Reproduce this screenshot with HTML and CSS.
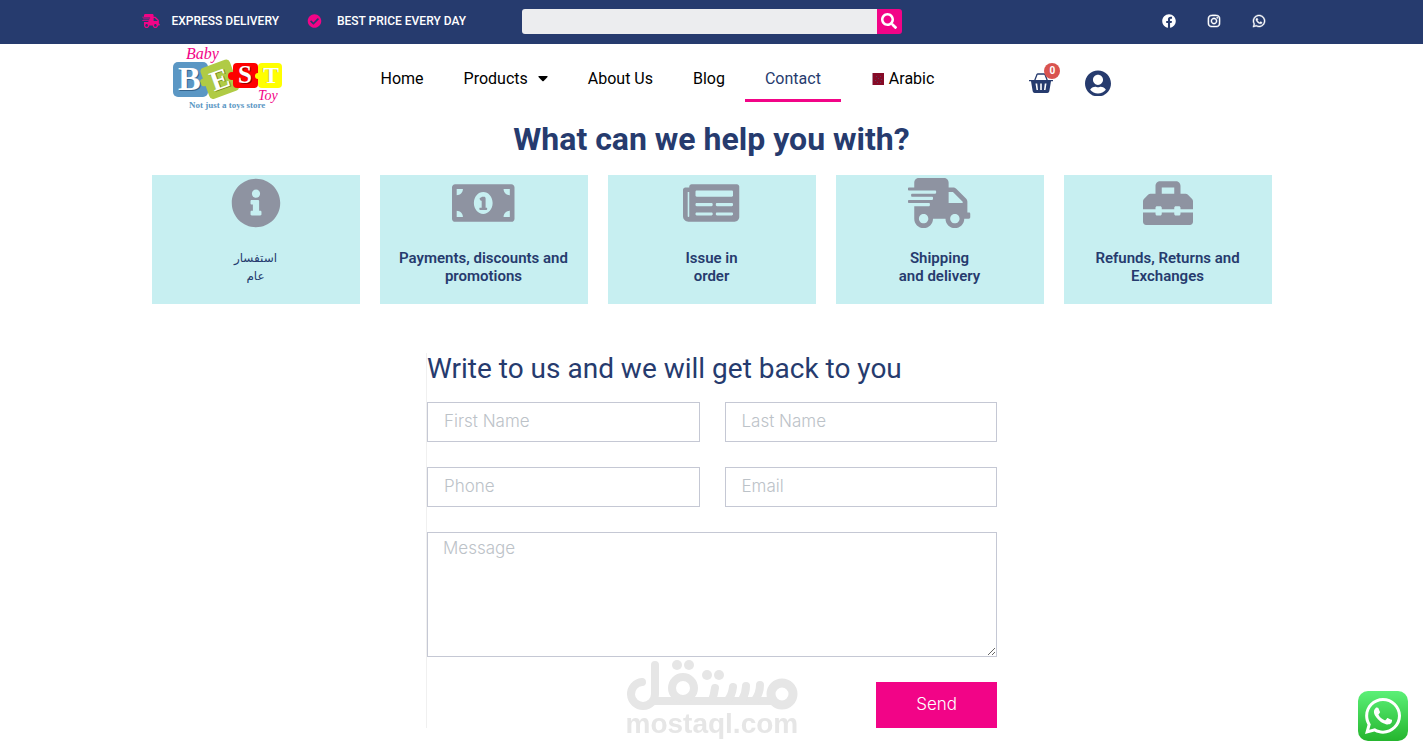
FILE: index.html
```html
<!DOCTYPE html>
<html lang="en">
<head>
<meta charset="utf-8">
<meta name="viewport" content="width=device-width, initial-scale=1">
<title>Contact – Baby Best Toy</title>
<link rel="stylesheet" href="styles.css">
</head>
<body>
<svg class="sprite" aria-hidden="true">
  <symbol id="i-truck" viewBox="0 0 640 512"><path d="M624 352h-16V243.900c0-12.700-5.100-24.900-14.100-33.900L494 110.100c-9-9-21.200-14.100-33.900-14.100H416V48c0-26.500-21.500-48-48-48H112C85.500 0 64 21.500 64 48v48H8c-4.400 0-8 3.600-8 8v16c0 4.400 3.600 8 8 8h272c4.400 0 8 3.600 8 8v16c0 4.400-3.600 8-8 8H40c-4.400 0-8 3.600-8 8v16c0 4.400 3.600 8 8 8h208c4.400 0 8 3.600 8 8v16c0 4.400-3.600 8-8 8H8c-4.400 0-8 3.600-8 8v16c0 4.400 3.600 8 8 8h208c4.400 0 8 3.600 8 8v16c0 4.400-3.600 8-8 8H64v128c0 53 43 96 96 96s96-43 96-96h128c0 53 43 96 96 96s96-43 96-96h48c8.800 0 16-7.200 16-16v-32c0-8.800-7.200-16-16-16zM160 464c-26.500 0-48-21.500-48-48s21.500-48 48-48 48 21.500 48 48-21.500 48-48 48zm320 0c-26.500 0-48-21.500-48-48s21.500-48 48-48 48 21.500 48 48-21.500 48-48 48zm80-208H416V144h44.100l99.900 99.900V256z"/></symbol>
  <symbol id="i-whatsapp" viewBox="0 0 448 512"><path d="M380.900 97.100C339 55.100 283.200 32 223.900 32c-122.400 0-222 99.600-222 222 0 39.100 10.200 77.300 29.600 111L0 480l117.700-30.900c32.400 17.700 68.900 27 106.100 27h.1c122.300 0 224.100-99.600 224.100-222 0-59.300-25.200-115-67.100-157zm-157 341.600c-33.200 0-65.700-8.900-94-25.700l-6.700-4-69.800 18.300L72 359.200l-4.400-7c-18.500-29.400-28.200-63.300-28.200-98.200 0-101.700 82.800-184.500 184.600-184.500 49.300 0 95.600 19.200 130.400 54.100 34.800 34.900 56.200 81.200 56.100 130.500 0 101.800-84.900 184.600-186.600 184.600zm101.200-138.200c-5.500-2.800-32.800-16.200-37.900-18-5.100-1.900-8.800-2.800-12.500 2.800-3.700 5.600-14.300 18-17.600 21.800-3.200 3.700-6.500 4.200-12 1.400-32.600-16.300-54-29.100-75.500-66-5.700-9.800 5.700-9.100 16.300-30.300 1.800-3.700.9-6.900-.5-9.700-1.400-2.800-12.500-30.100-17.100-41.200-4.500-10.800-9.100-9.300-12.500-9.500-3.200-.2-6.900-.2-10.600-.2-3.700 0-9.700 1.400-14.800 6.900-5.100 5.600-19.400 19-19.400 46.300 0 27.300 19.900 53.700 22.600 57.400 2.800 3.700 39.100 59.700 94.800 83.800 35.200 15.200 49 16.500 66.600 13.900 10.700-1.600 32.800-13.400 37.400-26.400 4.600-13 4.600-24.100 3.200-26.400-1.300-2.500-5-3.900-10.500-6.600z"/></symbol>
</svg>

<div class="topbar">
  <div class="container topbar-row">
    <ul class="perks">
      <li><svg class="perk-icon perk-truck"><use href="#i-truck"/></svg>EXPRESS DELIVERY</li>
      <li><svg class="perk-icon" viewBox="0 0 512 512"><path d="M504 256c0 137-111 248-248 248S8 393 8 256 119 8 256 8s248 111 248 248zM227.300 387.300l184-184c6.200-6.200 6.200-16.400 0-22.600l-22.600-22.600c-6.200-6.200-16.400-6.200-22.600 0L216 308.100l-70.100-70.100c-6.200-6.200-16.400-6.200-22.600 0l-22.600 22.600c-6.200 6.200-6.200 16.400 0 22.600l104 104c6.200 6.300 16.400 6.300 22.600.1z"/></svg>BEST PRICE EVERY DAY</li>
    </ul>
    <form class="search" role="search">
      <input type="search" aria-label="Search">
      <button type="button" aria-label="Search"><svg viewBox="0 0 512 512"><path d="M505 442.700L405.300 343c-4.500-4.500-10.600-7-17-7H372c27.600-35.300 44-79.700 44-128C416 93.100 322.900 0 208 0S0 93.100 0 208s93.100 208 208 208c48.300 0 92.700-16.400 128-44v16.300c0 6.400 2.500 12.500 7 17l99.700 99.700c9.400 9.400 24.600 9.400 33.900 0l28.300-28.300c9.400-9.400 9.400-24.600.1-34zM208 336c-70.700 0-128-57.200-128-128 0-70.700 57.200-128 128-128 70.700 0 128 57.200 128 128 0 70.700-57.200 128-128 128z"/></svg></button>
    </form>
    <div class="social">
      <a href="#" aria-label="Facebook"><svg viewBox="0 0 512 512"><path d="M504 256C504 119 393 8 256 8S8 119 8 256c0 123.800 90.700 226.400 209.300 245V327.700h-63V256h63v-54.600c0-62.200 37-96.500 93.700-96.500 27.100 0 55.500 4.800 55.500 4.800v61h-31.300c-30.800 0-40.400 19.100-40.400 38.700V256h68.800l-11 71.700h-57.800V501C413.300 482.400 504 379.800 504 256z"/></svg></a>
      <a href="#" aria-label="Instagram"><svg class="bold-icon" viewBox="0 0 448 512"><path d="M224.100 141c-63.600 0-114.900 51.300-114.900 114.900s51.300 114.900 114.900 114.900S339 319.500 339 255.900 287.700 141 224.100 141zm0 189.600c-41.100 0-74.700-33.500-74.700-74.700s33.500-74.700 74.700-74.700 74.700 33.500 74.700 74.700-33.600 74.700-74.700 74.700zm146.400-194.300c0 14.900-12 26.800-26.800 26.800-14.900 0-26.800-12-26.800-26.800s12-26.800 26.800-26.800 26.800 12 26.800 26.800zm76.100 27.200c-1.700-35.900-9.900-67.700-36.200-93.900-26.200-26.200-58-34.400-93.900-36.200-37-2.100-147.900-2.100-184.900 0-35.800 1.700-67.600 9.900-93.900 36.100s-34.400 58-36.200 93.900c-2.100 37-2.100 147.900 0 184.900 1.700 35.900 9.900 67.700 36.200 93.900s58 34.400 93.900 36.200c37 2.100 147.900 2.100 184.900 0 35.900-1.700 67.700-9.900 93.900-36.200 26.200-26.200 34.400-58 36.200-93.900 2.100-37 2.100-147.800 0-184.800zM398.800 388c-7.800 19.600-22.900 34.700-42.600 42.600-29.500 11.700-99.500 9-132.100 9s-102.700 2.600-132.100-9c-19.600-7.800-34.700-22.900-42.600-42.600-11.700-29.500-9-99.500-9-132.100s-2.600-102.700 9-132.100c7.800-19.600 22.900-34.700 42.600-42.600 29.500-11.700 99.500-9 132.100-9s102.700-2.600 132.100 9c19.600 7.800 34.700 22.900 42.600 42.600 11.700 29.500 9 99.500 9 132.100s2.700 102.700-9 132.100z"/></svg></a>
      <a href="#" aria-label="WhatsApp"><svg class="bold-icon"><use href="#i-whatsapp"/></svg></a>
    </div>
  </div>
</div>

<header class="container header">
  <a class="logo" href="#" aria-label="Baby Best Toy">
    <svg viewBox="0 0 110 66">
      <rect x="0" y="16" width="35" height="35" rx="5" fill="#5b97c4"/>
      <g transform="rotate(-20 46 33)"><rect x="31" y="17" width="31" height="33" rx="4" fill="#b0cb45"/><circle cx="31" cy="31" r="4" fill="#b0cb45"/></g>
      <rect x="60" y="17" width="25" height="25" rx="4" fill="#fe0000"/><circle cx="59" cy="30" r="4" fill="#fe0000"/>
      <rect x="85" y="17" width="24" height="25" rx="4" fill="#ffff00"/><circle cx="85" cy="30" r="3" fill="#ffff00"/>
      <g class="logo-letters">
        <text x="6" y="45" font-size="34" fill="#34638b">B</text><text x="5" y="44" font-size="34">B</text>
        <g transform="rotate(-20 46 33)"><text x="38" y="44" font-size="28" fill="#758a24">E</text><text x="37" y="43" font-size="28">E</text></g>
        <text x="66" y="38" font-size="25" fill="#990000">S</text><text x="65" y="37" font-size="25">S</text>
        <text x="89" y="37" font-size="24" fill="#c9c900">T</text><text x="90" y="37" font-size="24">T</text>
      </g>
      <g class="logo-script"><text x="13" y="13" font-size="16">Baby</text><text x="85" y="54" font-size="14">Toy</text></g>
      <text class="logo-tagline" x="16" y="62">Not just a toys store</text>
    </svg>
  </a>
  <nav class="nav" aria-label="Main">
    <a href="#">Home</a>
    <a href="#">Products<svg class="caret" viewBox="0 0 10 6"><path d="M1 0h8q1 0 .5 1L5.700 5q-.7.700-1.400 0L.5 1Q0 0 1 0z"/></svg></a>
    <a href="#">About Us</a>
    <a href="#">Blog</a>
    <a class="active" href="#" aria-current="page">Contact</a>
    <a class="lang" href="#"><svg class="flag" viewBox="0 0 12 12"><path fill="#860a27" d="M0 0h12v12H0z"/><path fill="#b58a9b" d="M0 0h1v12H0z"/><path fill="#5c3d5c" d="M4 3h1v1H4zM8 3h1v1H8zM6 5h1v1H6zM3 7h1v1H3zM9 6h1v1H9zM5 9h1v1H5zM8 9h1v1H8z"/></svg>Arabic</a>
  </nav>
  <div class="actions">
    <a class="cart" href="#" aria-label="Basket">
      <svg viewBox="0 0 24 20"><path fill="none" stroke="#263b6e" stroke-width="1.300" d="M5.500 8 8 1.600Q8.200 1 9 1h6q.8 0 1 .6L18.500 8"/><path fill="#263b6e" fill-rule="evenodd" d="M0 7h24v1.300h-2l-1.700 10q-.3 1.700-2 1.700H5.700q-1.700 0-2-1.700L2 8.300H0zM6.500 10.500l1 6.500H9l-.8-6.500zM11.200 10.500V17h1.600v-6.500zM15.800 10.500L15 17h1.500l1-6.500z"/></svg>
      <span class="badge">0</span>
    </a>
    <a class="account" href="#" aria-label="Account"><svg viewBox="0 0 496 512"><path d="M248 8C111 8 0 119 0 256s111 248 248 248 248-111 248-248S385 8 248 8zm0 84c53 0 96 43 96 96s-43 96-96 96-96-43-96-96 43-96 96-96zm0 356c-60 0-114-27-150-70 19-36 57-60 101-60 9 0 25 10 49 10s40-10 49-10c44 0 82 24 101 60-36 43-90 70-150 70z"/></svg></a>
  </div>
</header>

<main>
  <h1>What can we help you with?</h1>
  <div class="topics">
    <a class="topic" href="#">
      <svg viewBox="0 0 512 512"><path d="M256 8C119 8 8 119.100 8 256c0 137 111 248 248 248s248-111 248-248C504 119.100 393 8 256 8zm0 110c23.200 0 42 18.800 42 42s-18.800 42-42 42-42-18.800-42-42 18.800-42 42-42zm56 254c0 6.600-5.400 12-12 12h-88c-6.600 0-12-5.400-12-12v-24c0-6.600 5.400-12 12-12h12v-64h-12c-6.600 0-12-5.400-12-12v-24c0-6.600 5.400-12 12-12h64c6.600 0 12 5.400 12 12v100h12c6.600 0 12 5.400 12 12v24z"/></svg>
      <span class="arabic" lang="ar" dir="rtl">استفسار<br>عام</span>
    </a>
    <a class="topic" href="#">
      <svg viewBox="0 0 640 512"><path fill-rule="evenodd" d="M608 64H32C14 64 0 78 0 96v320c0 18 14 32 32 32h576c18 0 32-14 32-32V96c0-18-14-32-32-32zM48 400v-64c35 0 64 29 64 64H48zm0-224v-64h64c0 35-29 64-64 64zm272 192c-53 0-96-50-96-112s43-112 96-112 96 50 96 112-43 112-96 112zm272 32h-64c0-35 29-64 64-64v64zm0-224c-35 0-64-29-64-64h64v64z"/><path d="M352 304h-8v-96c0-9-7-16-16-16h-14c-5 0-9 1-13 4l-15 10c-4 3-5 8-2 11l9 13c2 4 7 5 11 2v72h-8c-9 0-16 0-16 8v8c0 4 4 8 8 8h64c4 0 8-4 8-8v-8c0-8-4-8-8-8z"/></svg>
      <span>Payments, discounts and<br>promotions</span>
    </a>
    <a class="topic" href="#">
      <svg viewBox="0 0 576 512"><path d="M552 64H88c-13.300 0-24 10.700-24 24v8H24c-13.300 0-24 10.700-24 24v272c0 30.900 25.100 56 56 56h472c26.500 0 48-21.500 48-48V88c0-13.300-10.700-24-24-24zM56 400a8 8 0 0 1-8-8V144h16v248a8 8 0 0 1-8 8zm236-16H140c-6.600 0-12-5.400-12-12v-8c0-6.600 5.400-12 12-12h152c6.600 0 12 5.400 12 12v8c0 6.600-5.400 12-12 12zm208 0H348c-6.600 0-12-5.400-12-12v-8c0-6.600 5.400-12 12-12h152c6.600 0 12 5.400 12 12v8c0 6.600-5.400 12-12 12zm-208-96H140c-6.600 0-12-5.400-12-12v-8c0-6.600 5.400-12 12-12h152c6.600 0 12 5.400 12 12v8c0 6.600-5.400 12-12 12zm208 0H348c-6.600 0-12-5.400-12-12v-8c0-6.600 5.400-12 12-12h152c6.600 0 12 5.400 12 12v8c0 6.600-5.400 12-12 12zm0-96H140c-6.600 0-12-5.400-12-12v-40c0-6.600 5.400-12 12-12h360c6.600 0 12 5.400 12 12v40c0 6.600-5.400 12-12 12z"/></svg>
      <span>Issue in<br>order</span>
    </a>
    <a class="topic" href="#">
      <svg viewBox="0 0 640 512"><use href="#i-truck"/></svg>
      <span>Shipping<br>and delivery</span>
    </a>
    <a class="topic" href="#">
      <svg viewBox="0 0 512 512"><path d="M502.600 214.600l-45.200-45.200c-6-6-14.200-9.400-22.700-9.400H384V80c0-26.500-21.500-48-48-48H176c-26.500 0-48 21.500-48 48v80H77.300c-8.500 0-16.700 3.400-22.700 9.400L9.400 214.600c-6 6-9.400 14.200-9.400 22.700V320h128v-16c0-8.800 7.200-16 16-16h32c8.800 0 16 7.200 16 16v16h128v-16c0-8.800 7.200-16 16-16h32c8.800 0 16 7.200 16 16v16h128v-82.700c0-8.500-3.400-16.700-9.400-22.700zM320 160H192V96h128v64zm64 208c0 8.800-7.200 16-16 16h-32c-8.800 0-16-7.200-16-16v-16H192v16c0 8.800-7.200 16-16 16h-32c-8.800 0-16-7.200-16-16v-16H0v96c0 17.700 14.300 32 32 32h448c17.700 0 32-14.300 32-32v-96H384v16z"/></svg>
      <span>Refunds, Returns and<br>Exchanges</span>
    </a>
  </div>

  <section class="contact">
    <h2>Write to us and we will get back to you</h2>
    <form class="contact-form">
      <input type="text" placeholder="First Name" aria-label="First Name">
      <input type="text" placeholder="Last Name" aria-label="Last Name">
      <input type="tel" placeholder="Phone" aria-label="Phone">
      <input type="email" placeholder="Email" aria-label="Email">
      <textarea placeholder="Message" aria-label="Message"></textarea>
      <button type="button">Send</button>
    </form>
  </section>
</main>

<div class="watermark">
  <svg viewBox="0 0 172 52" role="img" aria-label="مستقل">
    <g fill="none" stroke="#e6e6e6" stroke-width="8" stroke-linecap="round" stroke-linejoin="round">
      <path d="M16 23A12 12 0 1 0 29 35V6M29 42H147"/>
      <circle cx="57" cy="29" r="11"/>
      <path d="M86 41Q88 36 89 29M102 41Q106 36 107 28M116 41Q120 34 120 27M129 41Q134 34 134 26"/>
      <circle cx="156" cy="35" r="11" stroke-width="9"/>
    </g>
    <g fill="#e6e6e6"><circle cx="51" cy="6" r="5"/><circle cx="63" cy="6" r="5"/><circle cx="81" cy="16" r="5"/><circle cx="93" cy="16" r="5"/></g>
  </svg>
  <span>mostaql.com</span>
</div>

<a class="chat" href="#" aria-label="Chat on WhatsApp">
  <svg viewBox="0 0 448 512"><use href="#i-whatsapp"/></svg>
</a>
</body>
</html>
```
FILE: styles.css
```css
* {
  box-sizing: border-box;
}

body {
  margin: 0;
  background: #fff;
  color: #263b6e;
  font-family: Roboto, "Liberation Sans", sans-serif;
}

a {
  color: inherit;
  text-decoration: none;
}

button {
  border: 0;
  cursor: pointer;
}

svg {
  display: block;
  fill: currentColor;
}

.sprite {
  position: absolute;
  width: 0;
  height: 0;
}

.container {
  max-width: 1140px;
  margin: 0 auto;
}

/* Top bar */
.topbar {
  background: #263b6e;
  color: #fff;
}

.topbar-row {
  display: grid;
  grid-template-columns: 1fr 1fr 1fr;
  align-items: center;
  min-height: 44px;
  padding-bottom: 2px;
}

.perks {
  display: flex;
  gap: 28px;
  margin: 0;
  padding: 0;
  list-style: none;
  font-size: 12px;
  font-weight: 500;
  line-height: 16px;
  white-space: nowrap;
}

.perks li {
  display: flex;
  align-items: center;
  gap: 15px;
}

.perk-icon {
  width: 15px;
  height: 14px;
  color: #f20487;
}

.perk-truck {
  width: 18px;
  margin-right: -3px;
}

.search {
  display: flex;
  height: 25px;
  overflow: hidden;
  border-radius: 3px;
}

.search input {
  flex: 1;
  min-width: 0;
  border: 0;
  border-radius: 0;
  padding: 0 8px;
  background: #ecedef;
}

.search button {
  display: grid;
  place-items: center;
  width: 25px;
  padding: 0;
  background: #f20487;
  color: #fff;
}

.search svg {
  width: 16px;
}

.social {
  display: flex;
  justify-content: flex-end;
  gap: 31px;
  padding-right: 16px;
}

.social svg {
  width: 14px;
  height: 14px;
}

.bold-icon {
  overflow: visible;
  stroke: currentColor;
  stroke-width: 16;
}

/* Header */
.header {
  display: flex;
  align-items: center;
  padding: 2px 31px;
}

.logo {
  flex: 0 0 110px;
  margin-right: 78px;
}

.logo-letters {
  fill: #fff;
  font-family: "Liberation Serif", serif;
  font-weight: 700;
}

.logo-script {
  fill: #f20487;
  font-family: "Liberation Serif", cursive;
  font-style: italic;
}

.logo-tagline {
  fill: #5b97c4;
  font-family: "Liberation Serif", serif;
  font-size: 9px;
  font-weight: 700;
}

.nav {
  display: flex;
  color: #000;
  font-size: 16px;
  line-height: 20px;
  white-space: nowrap;
}

.nav a {
  display: flex;
  align-items: center;
  padding: 12px 20px 10px;
  border-bottom: 3px solid transparent;
}

.nav .active {
  border-color: #f20487;
  color: #263b6e;
}

.caret {
  width: 10px;
  height: 6px;
  margin-left: 10px;
}

.nav .lang {
  gap: 5px;
  margin-left: 11px;
}

.flag {
  width: 12px;
}

.actions {
  display: flex;
  align-items: center;
  gap: 32px;
  padding: 8px 0 0 75px;
}

.cart {
  position: relative;
}

.cart svg {
  width: 24px;
}

.badge {
  position: absolute;
  top: -10px;
  right: -7px;
  width: 16px;
  border-radius: 50%;
  background: #d9534f;
  color: #fff;
  font-size: 10px;
  font-weight: 700;
  line-height: 16px;
  text-align: center;
}

.account svg {
  width: 26px;
}

/* Help topics */
h1 {
  margin: 5px 0 16px;
  font-size: 32px;
  font-weight: 700;
  line-height: 40px;
  text-align: center;
}

.topics {
  display: grid;
  grid-template-columns: repeat(5, 1fr);
  gap: 20px;
  max-width: 1120px;
  margin: 0 auto;
}

.topic {
  display: flex;
  flex-direction: column;
  align-items: center;
  gap: 21px;
  padding: 3px 10px 19px;
  background: #c7eff1;
  font-size: 15px;
  font-weight: 600;
  line-height: 18px;
  text-align: center;
}

.topic svg {
  height: 50px;
  color: #8e93a1;
}

.topic .arabic {
  font-family: "DejaVu Sans", sans-serif;
  font-size: 12px;
  font-weight: 400;
}

/* Contact form */
.contact {
  max-width: 571px;
  margin: 49px auto 0;
  border-left: 1px solid #f0f0f0;
}

h2 {
  margin: 0 0 18px;
  font-size: 28px;
  font-weight: 400;
  line-height: 31px;
}

.contact-form {
  display: grid;
  grid-template-columns: 1fr 1fr;
  gap: 25px;
}

.contact-form input,
.contact-form textarea,
.contact-form button {
  font-family: Inter, "Open Sans", sans-serif;
  font-size: 17px;
  font-weight: 300;
}

.contact-form input,
.contact-form textarea {
  width: 100%;
  min-width: 0;
  border: 1px solid #c5c8d4;
  border-radius: 0;
  background: #fff;
  color: #263b6e;
}

.contact-form input {
  height: 40px;
  padding: 0 16px 2px;
}

.contact-form textarea {
  display: block;
  grid-column: 1 / -1;
  height: 125px;
  padding: 5px 15px;
  resize: vertical;
}

.contact-form ::placeholder {
  color: #bcc2c8;
}

.contact-form button {
  grid-column: 1 / -1;
  justify-self: end;
  padding: 12px 40px 14px;
  background: #f20487;
  color: #fff;
  line-height: 20px;
}

/* Overlays */
.watermark {
  position: fixed;
  bottom: 16px;
  left: 50%;
  width: 172px;
  transform: translateX(-50%);
  color: #e6e6e6;
  font-family: "Liberation Sans", Arial, sans-serif;
  font-size: 28px;
  font-weight: 700;
  line-height: 26px;
  text-align: center;
  pointer-events: none;
}

.chat {
  position: fixed;
  right: 15px;
  bottom: 12px;
  display: grid;
  place-items: center;
  width: 50px;
  height: 50px;
  border-radius: 10px;
  background: linear-gradient(#5bf077, #25b52e);
  color: #fff;
}

.chat svg {
  width: 36px;
  height: 42px;
}
```
